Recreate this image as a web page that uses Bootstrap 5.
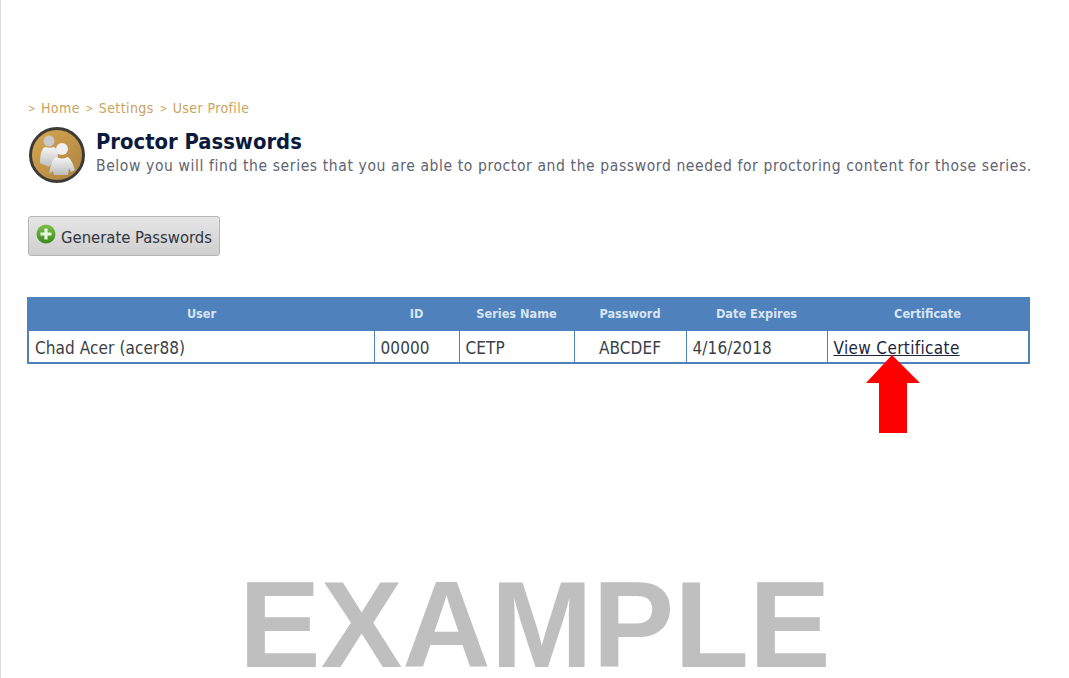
<!DOCTYPE html>
<html lang="en">
<head>
    <meta charset="UTF-8">
    <title>Proctor Passwords</title>
    <link href="https://cdn.jsdelivr.net/npm/bootstrap@5.3.0/dist/css/bootstrap.min.css" rel="stylesheet">
    <style>
        html, body {
            height: 100%;
        }

        body {
            position: relative;
            overflow: hidden;
            background: #fff;
            border-left: 1px solid #dcdcdc;
            font-family: "DejaVu Sans Condensed", "DejaVu Sans", sans-serif;
            color: #333;
        }

        .page-wrap {
            padding: 100px 38px 0 27px;
        }

        .crumbs {
            font-size: 14px;
            line-height: 17px;
            letter-spacing: .4px;
            color: #c9a25e;
            gap: 6px;
        }

        .crumbs span {
            width: 7px;
            font-size: 10px;
        }

        .crumbs a {
            color: #c9a25e;
            text-decoration: none;
        }

        .head-row {
            margin-top: 10px;
            gap: 10px;
        }

        .head-icon {
            width: 58px;
            height: 56px;
            flex: none;
        }

        .head-text {
            margin-top: 1px;
        }

        .head-title {
            margin: 0;
            font-size: 21.8px;
            line-height: 28px;
            font-weight: 700;
            color: #0b1a3c;
        }

        .head-sub {
            margin: 1px 0 0;
            font-size: 15.5px;
            line-height: 19px;
            color: #5e6472;
            letter-spacing: .61px;
            white-space: nowrap;
        }

        .gen-btn {
            margin-top: 33px;
            width: 192px;
            height: 40px;
            padding: 0 0 0 7px;
            gap: 5px;
            border: 1px solid #b5b5b5;
            border-radius: 3px;
            background: linear-gradient(#e6e6e6, #cfcfcf);
            color: #2f3640;
            font-size: 16.5px;
        }

        .gen-btn:hover {
            background: linear-gradient(#e6e6e6, #cfcfcf);
            border-color: #b5b5b5;
            color: #2f3640;
        }

        .gen-btn svg {
            margin-top: -5px;
        }

        .gen-btn span {
            margin-top: 5px;
        }

        .proctor-table {
            margin: 41px 0 0 -1px;
            width: 1001px;
            table-layout: fixed;
            border-collapse: collapse;
            border: 2px solid #4f81bd;
        }

        .proctor-table th {
            height: 32px;
            padding: 0;
            background: #4f81bd;
            color: #d9e5f3;
            border: 0;
            font-size: 12.6px;
            font-weight: 700;
            text-align: center;
            vertical-align: middle;
        }

        .proctor-table td {
            height: 33px;
            padding: 4px 6px 0;
            border: 1px solid #4f81bd;
            border-bottom: 0;
            font-size: 17px;
            letter-spacing: .1px;
            color: #3a3f47;
            vertical-align: middle;
            white-space: nowrap;
        }

        .proctor-table td a {
            color: #1c2540;
            letter-spacing: .35px;
        }

        .overlay-arrow {
            position: absolute;
            left: 865px;
            top: 355px;
            width: 54px;
            height: 78px;
        }

        .example-mark {
            position: absolute;
            left: 238px;
            top: 573px;
            font-family: "Liberation Sans", Arial, sans-serif;
            font-size: 122.4px;
            line-height: .85;
            font-weight: 700;
            color: #bfbfbf;
            white-space: nowrap;
        }
    </style>
</head>

<body>
<div class="page-wrap">

    <div class="crumbs d-flex align-items-center">
        <span>&gt;</span><a href="#">Home</a>
        <span>&gt;</span><a href="#">Settings</a>
        <span>&gt;</span><a href="#">User Profile</a>
    </div>

    <div class="head-row d-flex align-items-start">
        <svg class="head-icon" viewBox="0 0 58 56">
            <defs>
                <linearGradient id="goldFill" x1="0" y1="0" x2="1" y2="1">
                    <stop offset="0" stop-color="#d8a850"/>
                    <stop offset="1" stop-color="#ab8141"/>
                </linearGradient>
                <linearGradient id="silverFill" x1="0" y1="0" x2="0" y2="1">
                    <stop offset="0" stop-color="#f6f6f6"/>
                    <stop offset="1" stop-color="#bdbdbd"/>
                </linearGradient>
            </defs>
            <circle cx="29" cy="28" r="26.5" fill="url(#goldFill)" stroke="#3c3b36" stroke-width="3"/>
            <circle cx="21" cy="14" r="5.5" fill="#c9c9c9"/>
            <path d="M12 36c0-9 2-15 5-16 3 1 6 1 9 0 3 2 4 5 4 9l-9 11z" fill="url(#silverFill)"/>
            <circle cx="34" cy="22" r="6" fill="#f0f0f0"/>
            <path d="M21 47c2-11 4-16 8-17 3 2 7 2 10 0 4 1 6 7 8 13l-4 2-2-4-1 7H26l-1-4z" fill="url(#silverFill)"/>
        </svg>
        <div class="head-text">
            <h1 class="head-title">Proctor Passwords</h1>
            <p class="head-sub">Below you will find the series that you are able to proctor and the password needed for proctoring content for those series.</p>
        </div>
    </div>

    <button type="button" class="btn gen-btn d-flex align-items-center">
        <svg width="20" height="20" viewBox="0 0 20 20">
            <defs>
                <linearGradient id="greenFill" x1="0" y1="0" x2="0" y2="1">
                    <stop offset="0" stop-color="#7cc04a"/>
                    <stop offset="1" stop-color="#3a8a1e"/>
                </linearGradient>
            </defs>
            <circle cx="10" cy="10" r="9.5" fill="url(#greenFill)"/>
            <path d="M10 4.5v11M4.5 10h11" stroke="#e8f5df" stroke-width="3.2"/>
        </svg>
        <span>Generate Passwords</span>
    </button>

    <table class="proctor-table">
        <colgroup>
            <col style="width:346px">
            <col style="width:85px">
            <col style="width:115px">
            <col style="width:112px">
            <col style="width:141px">
            <col style="width:202px">
        </colgroup>
        <thead>
            <tr>
                <th>User</th>
                <th>ID</th>
                <th>Series Name</th>
                <th>Password</th>
                <th>Date Expires</th>
                <th>Certificate</th>
            </tr>
        </thead>
        <tbody>
            <tr>
                <td>Chad Acer (acer88)</td>
                <td>00000</td>
                <td>CETP</td>
                <td class="text-center">ABCDEF</td>
                <td>4/16/2018</td>
                <td><a href="#">View Certificate</a></td>
            </tr>
        </tbody>
    </table>
</div>

<svg class="overlay-arrow" viewBox="0 0 54 78">
    <path d="M26 0 54 28H41V78H13V28H0z" fill="#ff0000"/>
</svg>

<div class="example-mark">EXAMPLE</div>

<script src="https://cdn.jsdelivr.net/npm/bootstrap@5.3.0/dist/js/bootstrap.bundle.min.js"></script>
</body>
</html>
